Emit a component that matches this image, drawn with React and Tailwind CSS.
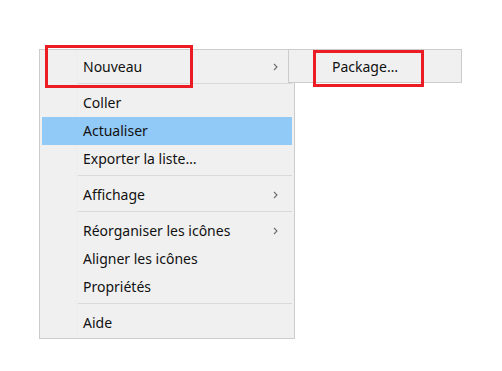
import React from 'react';

const font = { fontFamily: '"Noto Sans", "Open Sans", sans-serif' };

const Chevron = () => (
  <svg width="5" height="8" viewBox="0 0 5 8" className="text-[#6d6d6d]">
    <polyline points="1,1 4,4 1,7" fill="none" stroke="currentColor" strokeWidth="1.1" />
  </svg>
);

const Item = ({ label, active, sub }) => (
  <div
    className={`mx-[2px] h-[28px] flex items-center justify-between pl-[41px] pr-[14px] text-[14px] leading-none text-[#111111] ${
      active ? 'bg-[#91c9f7]' : ''
    }`}
  >
    <span className="-mt-[1px]">{label}</span>
    {sub && <Chevron />}
  </div>
);

const Sep = () => (
  <div className="h-[8px] pt-[2px] pl-[38px] pr-[2px]">
    <div className="h-px bg-[#d9d9d9]" />
  </div>
);

const menu = [
  { label: 'Nouveau', sub: true },
  'sep',
  { label: 'Coller' },
  { label: 'Actualiser', active: true },
  { label: 'Exporter la liste…' },
  'sep',
  { label: 'Affichage', sub: true },
  'sep',
  { label: 'Réorganiser les icônes', sub: true },
  { label: 'Aligner les icônes' },
  { label: 'Propriétés' },
  'sep',
  { label: 'Aide' },
];

export default function App() {
  return (
    <div className="w-[502px] h-[371px] bg-white relative overflow-hidden" style={font}>
      <div className="flex items-start pt-[49px] pl-[39px]">
        <div className="relative w-[256px] border border-[#cccccc] bg-[#f0f0f0] pt-[3px] pb-[1px]">
          <div className="absolute left-[36px] top-0 bottom-0 w-px bg-[#ececec]" />
          <div className="relative">
            {menu.map((m, i) =>
              m === 'sep' ? <Sep key={i} /> : <Item key={i} {...m} />
            )}
          </div>
        </div>
        <div className="relative -ml-[7px] w-[174px] border border-[#cccccc] bg-[#f0f0f0] pt-[3px] pb-[1px]">
          <Item label="Package…" />
        </div>
      </div>

      {/* annotation boxes */}
      <div className="absolute left-[45px] top-[45px] w-[148px] h-[43px] border-[3px] border-[#ec1c24]" />
      <div className="absolute left-[313px] top-[50px] w-[111px] h-[37px] border-[3px] border-[#ec1c24]" />
    </div>
  );
}
